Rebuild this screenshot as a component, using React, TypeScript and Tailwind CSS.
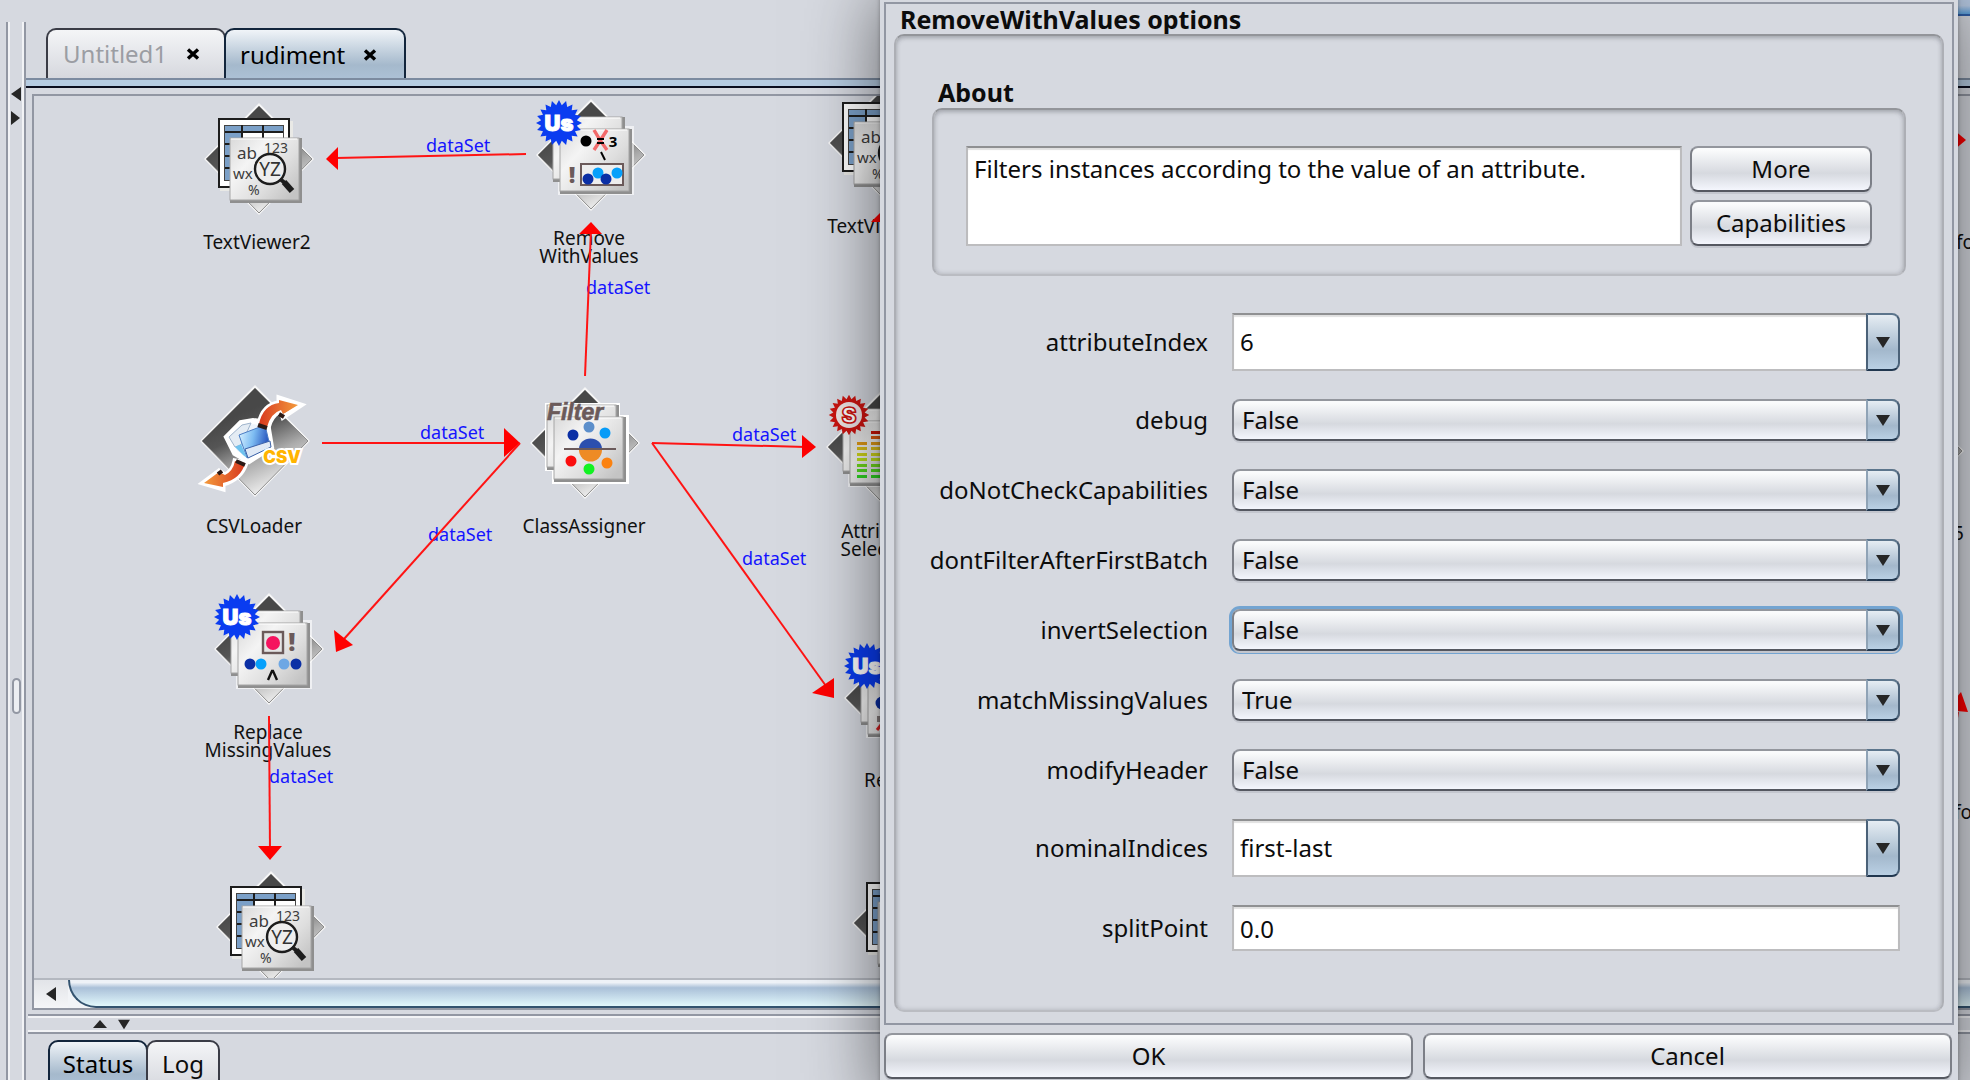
import type { ReactNode } from "react";

const ORIGIN = { x: 34, y: 96 };

/* ---------- small glyphs ---------- */

function Triangle({ dir, className }: { dir: "left" | "right" | "up" | "down"; className?: string }) {
  const points = {
    left: "12,0 12,14 2,7",
    right: "2,0 2,14 11,7",
    up: "0,11 14,11 7,3",
    down: "0,2 14,2 7,13",
  }[dir];
  return (
    <svg viewBox="0 0 14 14" className={className ?? "h-[14px] w-[14px]"} aria-hidden="true">
      <polygon points={points} fill="#262626" />
    </svg>
  );
}

function CloseGlyph() {
  return (
    <svg viewBox="0 0 14 14" className="h-[14px] w-[14px]" aria-hidden="true">
      <path d="M2 2.5 L12 11.5 M12 2.5 L2 11.5" stroke="#000" strokeWidth="3.4" />
    </svg>
  );
}

/* ---------- node drawings, centred on 0,0 ---------- */

function Defs() {
  return (
    <svg className="absolute h-0 w-0" aria-hidden="true">
      <defs>
        <linearGradient id="diamond" gradientUnits="userSpaceOnUse" x1="-22" y1="-24" x2="12" y2="50">
          <stop offset="0" stopColor="#484848" />
          <stop offset="0.25" stopColor="#555" />
          <stop offset="0.6" stopColor="#aaa" />
          <stop offset="1" stopColor="#efefef" />
        </linearGradient>
        <linearGradient id="card" x1="0" y1="0" x2="1" y2="0.8">
          <stop offset="0" stopColor="#d9d9d9" />
          <stop offset="0.35" stopColor="#f4f4f4" />
          <stop offset="0.7" stopColor="#dedede" />
          <stop offset="1" stopColor="#c4c4c4" />
        </linearGradient>
        <linearGradient id="arrow" x1="0" y1="0" x2="1" y2="0">
          <stop offset="0" stopColor="#d8391f" />
          <stop offset="1" stopColor="#f39a3c" />
        </linearGradient>
        <linearGradient id="arrowBack" x1="1" y1="0" x2="0" y2="0">
          <stop offset="0" stopColor="#d8391f" />
          <stop offset="1" stopColor="#f39a3c" />
        </linearGradient>
        <linearGradient id="folder" x1="0" y1="0.3" x2="1" y2="0.5">
          <stop offset="0" stopColor="#d4efff" />
          <stop offset="0.45" stopColor="#7dbcf2" />
          <stop offset="1" stopColor="#1c48b8" />
        </linearGradient>
      </defs>
    </svg>
  );
}

function Diamond() {
  return (
    <>
      <polygon points="0,-56 55,0 0,56 -55,0" fill="#f6f6f6" />
      <polygon points="0,-53 53,0 0,54 -53,0" fill="url(#diamond)" stroke="#8d8d8d" strokeWidth="1" />
    </>
  );
}

function Card({ x, y }: { x: number; y: number }) {
  return (
    <>
      <rect x={x} y={y} width="72" height="65" fill="#8f8f8f" />
      <rect x={x} y={y} width="69" height="62" fill="url(#card)" stroke="#a5a5a5" />
      <path d={`M${x + 1} ${y + 1} h66`} stroke="#fff" strokeWidth="1" />
    </>
  );
}

function Stack() {
  return (
    <>
      <rect x="-33" y="-29" width="76" height="69" fill="#fff" opacity="0.6" />
      <Card x={-38} y={-38} />
      <Card x={-31} y={-26} />
    </>
  );
}

const BURST = Array.from({ length: 40 }, (_, i) => {
  const r = i % 2 ? 18 : 23;
  const a = (i * Math.PI) / 20;
  return `${(r * Math.sin(a)).toFixed(1)},${(-r * Math.cos(a)).toFixed(1)}`;
}).join(" ");

function UsBadge() {
  return (
    <g transform="translate(-32,-32)">
      <polygon points={BURST} fill="#0a3cf0" />
      <text x="0" y="8" textAnchor="middle" fontFamily="Inter, sans-serif" fontWeight="900" fontSize="22" fill="#fff" stroke="#fff" strokeWidth="1">
        Us
      </text>
    </g>
  );
}

function SBadge() {
  return (
    <g transform="translate(-32,-32)">
      <polygon points={BURST} fill="#cc1410" transform="scale(0.88)" />
      <circle r="13" fill="#efe6e6" />
      <text x="0" y="8" textAnchor="middle" fontFamily="Inter, sans-serif" fontWeight="900" fontSize="22" fill="#fff" stroke="#cc1410" strokeWidth="1.6">
        S
      </text>
    </g>
  );
}

function ViewerIcon() {
  return (
    <>
      <Diamond />
      <rect x="-39" y="-38" width="73" height="70" fill="#e9e9e6" />
      <rect x="-40" y="-40" width="70" height="68" fill="#fff" stroke="#1d1d1d" strokeWidth="2" />
      <rect x="-35" y="-34" width="60" height="56" fill="#444" />
      <rect x="-34" y="-33" width="58" height="54" fill="#fff" />
      <rect x="-34" y="-33" width="58" height="6" fill="#7ba0c8" />
      <rect x="-34" y="-33" width="16" height="54" fill="#7ba0c8" />
      <path d="M-34 -27 H24 M-34 -15 H24 M-34 -3 H24 M-34 9 H24 M-17 -34 V21 M4 -34 V21" stroke="#1d1d1d" strokeWidth="2" />
      <Card x={-29} y={-21} />
      <g fontFamily="'Noto Sans', sans-serif" fill="#3c3c3c">
        <text x="-22" y="0" fontSize="17">ab</text>
        <text x="5" y="-6" fontSize="14">123</text>
        <text x="-26" y="20" fontSize="15">wx</text>
        <text x="-11" y="36" fontSize="14">%</text>
      </g>
      <circle cx="11" cy="10" r="15" fill="#eee" stroke="#1d1d1d" strokeWidth="2.4" />
      <text x="11" y="17" textAnchor="middle" fontFamily="'Noto Sans', sans-serif" fontSize="19" fill="#333">
        YZ
      </text>
      <path d="M21 20 L26 24" stroke="#1d1d1d" strokeWidth="4" />
      <path d="M25 23 L33 32" stroke="#1d1d1d" strokeWidth="6" />
    </>
  );
}

function RemoveIcon() {
  return (
    <>
      <Diamond />
      <Stack />
      <circle cx="-5" cy="-14" r="5.5" />
      <path d="M3 -25 Q9 -14 16 -5 M16 -25 Q9 -14 3 -5" fill="none" stroke="#f26b6b" strokeWidth="3.4" />
      <path d="M6 -16 H13 M6 -12 H13" stroke="#000" strokeWidth="2" />
      <text x="22" y="-8" textAnchor="middle" fontFamily="'Noto Sans', sans-serif" fontWeight="700" fontSize="15">3</text>
      <path d="M10 -3 L14 5" stroke="#000" strokeWidth="2" />
      <text x="-19" y="28" textAnchor="middle" fontFamily="'Noto Sans', sans-serif" fontWeight="900" fontSize="23" fill="#6b5a5a">!</text>
      <rect x="-10" y="9" width="42" height="21" fill="#eee" stroke="#6b5a5a" strokeWidth="2" />
      <circle cx="-3" cy="24" r="5.5" fill="#0b2fa5" />
      <circle cx="7" cy="18" r="5.5" fill="#06a0fb" />
      <circle cx="15" cy="24" r="5.5" fill="#0b2fa5" />
      <circle cx="26" cy="18" r="5.5" fill="#06a0fb" />
      <UsBadge />
    </>
  );
}

function ReplaceIcon() {
  return (
    <>
      <Diamond />
      <Stack />
      <rect x="-6" y="-17" width="20" height="21" fill="#e5e5e5" stroke="#6b5a5a" strokeWidth="2.4" />
      <circle cx="4" cy="-6" r="7" fill="#f5135f" />
      <text x="23" y="2" textAnchor="middle" fontFamily="'Noto Sans', sans-serif" fontWeight="900" fontSize="25" fill="#6b5a5a">!</text>
      <circle cx="-19" cy="15" r="5.5" fill="#0b2fa5" />
      <circle cx="-8" cy="15" r="5.5" fill="#06a0fb" />
      <circle cx="15" cy="15" r="5.5" fill="#6da7e4" />
      <circle cx="27" cy="15" r="5.5" fill="#0b2fa5" />
      <path d="M-1 31 L3 22 H4 L8 31" fill="none" stroke="#111" strokeWidth="2.4" />
      <UsBadge />
    </>
  );
}

function RemoveMoreIcon() {
  return (
    <>
      <Diamond />
      <Stack />
      <circle cx="-17" cy="5" r="6.5" fill="#0b2fa5" />
      <rect x="-22" y="18" width="10" height="6" fill="#8a8080" />
      <path d="M-22 32 L-14 22" stroke="#d22" strokeWidth="3" />
      <UsBadge />
    </>
  );
}

function AssignerIcon() {
  return (
    <>
      <Diamond />
      <path d="M-40 -40 H35 V-28 H44 V41 H-33 V28 H-40 Z" fill="#fff" />
      <Card x={-38} y={-38} />
      <Card x={-31} y={-26} />
      <text x="-10" y="-23" textAnchor="middle" fontFamily="'Liberation Sans', sans-serif" fontStyle="italic" fontWeight="700" fontSize="23" fill="#6b5a5a" stroke="#6b5a5a" strokeWidth="0.6">
        Filter
      </text>
      <circle cx="-12" cy="-8" r="5.5" fill="#0b2fa5" />
      <circle cx="4" cy="-16" r="5.5" fill="#5c8fcb" />
      <circle cx="20" cy="-10" r="5.5" fill="#069cf8" />
      <path d="M-6 6 A11 10 0 0 1 17 6 Z" fill="#2c4fae" />
      <path d="M-6 7 A11 11 0 0 0 17 7 Z" fill="#ee8b25" />
      <path d="M-21 6 H31" stroke="#6b5a5a" strokeWidth="2" />
      <circle cx="-14" cy="18" r="5.5" fill="#fb0d0d" />
      <circle cx="4" cy="26" r="5.5" fill="#12f222" />
      <circle cx="22" cy="20" r="5.5" fill="#fb8210" />
    </>
  );
}

const BARS = ["#cc1408", "#dd5a10", "#e09a18", "#dcc01c", "#cfd41c", "#bbdf1c", "#6fd81c", "#4fd820", "#2fd324"];

function SelectionIcon() {
  return (
    <>
      <Diamond />
      <Stack />
      {[0, 1, 2, 3].map((col) =>
        BARS.map((fill, row) =>
          row >= [2, 0, 3, 1][col] ? (
            <rect key={`${col}-${row}`} x={-24 + col * 14} y={-16 + row * 5 + Math.floor(row / 2)} width="10" height="3" fill={fill} />
          ) : null,
        ),
      )}
      <SBadge />
    </>
  );
}

function CsvIcon() {
  return (
    <>
      <Diamond />
      <path d="M4 -17 Q8 -36 24 -38 L24 -43 L46 -36 L28 -24 L26 -30 Q16 -26 13 -13 Z" fill="url(#arrow)" stroke="#fff" strokeWidth="5" />
      <path d="M-20 20 Q-22 30 -30 34 L-36 30 L-52 42 L-32 48 L-32 43 Q-14 38 -9 22 Z" fill="url(#arrowBack)" stroke="#fff" strokeWidth="5" />
      <path d="M-28 -4 L-14 -18 L-2 -20 L12 -18 L16 6 L-6 20 L-20 12 Z" fill="#eef4fb" stroke="#fff" strokeWidth="6" />
      <path d="M-26 -4 L-13 -16 L-4 -18 L-14 4 L-20 6 Z" fill="#e4ecf4" stroke="#9fb4cc" />
      <path d="M-16 -6 L10 -16 L15 5 L-8 17 Z" fill="url(#folder)" stroke="#4a7cc4" />
      <path d="M-10 8 L15 0 L16 6 L-7 17 Z" fill="#dfe9f6" stroke="#3c62a8" />
      <path d="M-20 6 L-14 3 L-8 17 L-12 14 Z" fill="#6fc2ee" />
      <path d="M4 -17 Q8 -36 24 -38 L24 -41 L43 -36 L28 -27 L26 -31 Q16 -28 12 -14 Z" fill="url(#arrow)" />
      <path d="M-20 20 Q-22 30 -30 34 L-36 31 L-51 42 L-32 46 L-32 42 Q-14 38 -10 22 Z" fill="url(#arrowBack)" />
      <path d="M3 -16 L12 -13 M-19 20 L-10 24" stroke="#2c1a16" strokeWidth="4" />
      <path d="M24 -27 L29 -24 M-37 33 L-33 30" stroke="#2c1a16" strokeWidth="4" />
      <text x="27" y="22" textAnchor="middle" fontFamily="Inter, sans-serif" fontWeight="900" fontSize="17" fill="#ffb400" stroke="#fff" strokeWidth="4" paintOrder="stroke">
        CSV
      </text>
    </>
  );
}

/* ---------- canvas data ---------- */

type FlowNode = { id: string; x: number; y: number; lines: string[]; labelX: number; labelY: number; icon: ReactNode };

const NODES: FlowNode[] = [
  { id: "tv2", x: 259, y: 159, lines: ["TextViewer2"], labelX: 257, labelY: 242, icon: <ViewerIcon /> },
  { id: "rwv", x: 591, y: 155, lines: ["Remove", "WithValues"], labelX: 589, labelY: 247, icon: <RemoveIcon /> },
  { id: "tv3", x: 883, y: 143, lines: ["TextViewer3"], labelX: 881, labelY: 226, icon: <ViewerIcon /> },
  { id: "csv", x: 255, y: 441, lines: ["CSVLoader"], labelX: 254, labelY: 526, icon: <CsvIcon /> },
  { id: "cls", x: 585, y: 443, lines: ["ClassAssigner"], labelX: 584, labelY: 526, icon: <AssignerIcon /> },
  { id: "att", x: 881, y: 447, lines: ["Attribute", "Selection"], labelX: 881, labelY: 540, icon: <SelectionIcon /> },
  { id: "rep", x: 269, y: 649, lines: ["Replace", "MissingValues"], labelX: 268, labelY: 741, icon: <ReplaceIcon /> },
  { id: "rem", x: 899, y: 698, lines: ["Remove"], labelX: 900, labelY: 780, icon: <RemoveMoreIcon /> },
  { id: "tv4", x: 271, y: 927, lines: [], labelX: 0, labelY: 0, icon: <ViewerIcon /> },
  { id: "tv5", x: 907, y: 923, lines: [], labelX: 0, labelY: 0, icon: <ViewerIcon /> },
  { id: "pf1", x: 1911, y: 159, lines: ["Performance"], labelX: 1984, labelY: 242, icon: null },
  { id: "j48", x: 1909, y: 451, lines: ["Classifier5"], labelX: 1918, labelY: 533, icon: <Diamond /> },
  { id: "pf2", x: 1911, y: 729, lines: ["Performance"], labelX: 1982, labelY: 812, icon: null },
];

const EDGES = [
  { line: "M526 154 L336 158", head: "326,159 338,147 338,170" },
  { line: "M585 376 L591 230", head: "591,222 579,234 602,234" },
  { line: "M322 443 H508", head: "520,443 504,428 504,457" },
  { line: "M520 443 L344 639", head: "334,630 336,652 353,645" },
  { line: "M652 443 L806 447", head: "816,447 802,435 802,458" },
  { line: "M652 443 L826 686", head: "834,698 834,678 812,693" },
  { line: "M269 716 L270 850", head: "270,860 258,846 282,846" },
  { line: "M1900 140 H1958", head: "1966,140 1954,130 1954,150" },
  { line: "M1950 760 L1958 712", head: "1961,692 1946,710 1968,712" },
  { line: "M884 218 L884 222", head: "884,209 871,222 896,222" },
];

const EDGE_LABELS = [
  { x: 426, y: 145 },
  { x: 586, y: 287 },
  { x: 420, y: 432 },
  { x: 428, y: 534 },
  { x: 732, y: 434 },
  { x: 742, y: 558 },
  { x: 269, y: 776 },
];

function FlowCanvas() {
  return (
    <div className="relative flex-1 overflow-hidden">
      {NODES.map((n) => (
        <svg
          key={n.id}
          viewBox="-60 -60 120 120"
          className="absolute h-[120px] w-[120px]"
          style={{ left: n.x - 60 - ORIGIN.x, top: n.y - 60 - ORIGIN.y }}
          aria-hidden="true"
        >
          {n.icon}
        </svg>
      ))}
      {NODES.filter((n) => n.lines.length > 0).map((n) => (
        <div
          key={n.id}
          className="absolute -translate-x-1/2 -translate-y-1/2 text-center text-[19px] leading-[18px] whitespace-nowrap text-[#111]"
          style={{ left: n.labelX - ORIGIN.x, top: n.labelY - ORIGIN.y }}
        >
          {n.lines.map((l) => (
            <div key={l}>{l}</div>
          ))}
        </div>
      ))}
      {EDGE_LABELS.map((l, i) => (
        <span
          key={i}
          className="absolute -translate-y-1/2 text-[18px] leading-[18px] text-[#1414ff]"
          style={{ left: l.x - ORIGIN.x, top: l.y - ORIGIN.y }}
        >
          dataSet
        </span>
      ))}
      <svg viewBox="34 96 2000 900" className="absolute top-0 left-0 h-[900px] w-[2000px]" aria-hidden="true">
        {EDGES.map((e) => (
          <g key={e.head}>
            <path d={e.line} stroke="#ff1414" strokeWidth="2" fill="none" />
            <polygon points={e.head} fill="#ff0000" />
          </g>
        ))}
      </svg>
    </div>
  );
}

/* ---------- tabs ---------- */

const TAB_BLUE = "border-[#12253c] bg-linear-to-b from-[#f0f4f8] via-[#a5b9cc] via-70% to-[#adc2d7] text-black";
const TAB_GREY = "border-[#3a3c46] bg-linear-to-b from-[#f4f5f7] to-[#d6d8de]";

function DocumentTabs() {
  return (
    <div role="tablist" className="flex h-[80px] items-end pl-[20px]">
      <div className={`flex h-[52px] w-[180px] items-center justify-between rounded-t-[10px] border-2 border-b-[#0a0a1c] pr-[24px] pl-[15px] ${TAB_GREY}`}>
        <button role="tab" aria-selected="false" className="text-[#9b9da3]">Untitled1</button>
        <button aria-label="Close Untitled1"><CloseGlyph /></button>
      </div>
      <div className={`-ml-[2px] flex h-[52px] w-[182px] items-center justify-between rounded-t-[10px] border-2 border-b-0 pr-[27px] pl-[14px] ${TAB_BLUE}`}>
        <button role="tab" aria-selected="true">rudiment</button>
        <button aria-label="Close rudiment"><CloseGlyph /></button>
      </div>
    </div>
  );
}

/* ---------- dialog controls ---------- */

const GLOSS =
  "rounded-[8px] border-2 border-x-[#7c7f87] border-t-[#93969d] border-b-[#555861] bg-linear-to-b from-[#fafbfc] from-5% via-[#d6d9df] via-60% to-[#f4f6fd] shadow-[0_2px_0_#c3c6ce]";
const BLUE =
  "flex w-[34px] items-center justify-center rounded-r-[8px] border-2 border-x-[#4a6178] border-t-[#5c758c] border-b-[#21374f] bg-linear-to-b from-[#e6edf3] via-[#a3b8cc] via-65% to-[#bad0e4]";
const GROUP =
  "rounded-[10px] border-2 border-x-[#adafb5] border-t-[#93959a] border-b-[#babcc2] shadow-[inset_0_2px_4px_rgba(80,82,90,0.3),inset_0_0_5px_rgba(80,82,90,0.2)]";
const FIELD =
  "border-2 border-x-[#bcbcbe] border-t-[#8f9092] border-b-[#bdbdbf] bg-white shadow-[inset_0_2px_1px_#e0e0e0] outline-none";

type Option = { name: string; value: string; kind: "combo" | "select" | "text"; focused?: boolean };

const OPTIONS: Option[] = [
  { name: "attributeIndex", value: "6", kind: "combo" },
  { name: "debug", value: "False", kind: "select" },
  { name: "doNotCheckCapabilities", value: "False", kind: "select" },
  { name: "dontFilterAfterFirstBatch", value: "False", kind: "select" },
  { name: "invertSelection", value: "False", kind: "select", focused: true },
  { name: "matchMissingValues", value: "True", kind: "select" },
  { name: "modifyHeader", value: "False", kind: "select" },
  { name: "nominalIndices", value: "first-last", kind: "combo" },
  { name: "splitPoint", value: "0.0", kind: "text" },
];

function OptionControl({ option }: { option: Option }) {
  if (option.kind === "combo") {
    return (
      <div className="flex h-[58px] min-w-0">
        <input id={option.name} defaultValue={option.value} className={`min-w-0 flex-1 border-r-0 px-[6px] ${FIELD}`} />
        <button aria-label={`Choose ${option.name}`} className={BLUE}>
          <Triangle dir="down" />
        </button>
      </div>
    );
  }
  if (option.kind === "text") {
    return <input id={option.name} defaultValue={option.value} className={`h-[46px] w-full min-w-0 px-[6px] ${FIELD}`} />;
  }
  return (
    <div className={`relative h-[42px] rounded-[8px] ${option.focused ? "ring-3 ring-[#73a4d1]" : ""}`}>
      <select id={option.name} defaultValue={option.value} className={`h-full w-full appearance-none pl-[8px] leading-[36px] outline-none ${GLOSS}`}>
        <option>True</option>
        <option>False</option>
      </select>
      <span className={`pointer-events-none absolute inset-y-0 right-0 border-l-[#8fa3b6] ${BLUE}`}>
        <Triangle dir="down" />
      </span>
    </div>
  );
}

function OptionsDialog() {
  return (
    <section
      role="dialog"
      aria-label="RemoveWithValues options"
      className="absolute -top-6 right-3 -bottom-2 left-[880px] flex flex-col bg-[#d6d9e0] px-1 pt-[26px] pb-[9px] shadow-[0_20px_70px_rgba(0,0,0,0.55),0_0_4px_rgba(0,0,0,0.3)]"
    >
      <div className="flex flex-1 flex-col border-2 border-[#9297a3] px-2 pb-[11px]">
        <h1 className="pl-[6px] text-[25px] leading-[30px] font-bold">RemoveWithValues options</h1>
        <div className={`flex-1 px-[36px] pt-[40px] ${GROUP}`}>
          <h2 className="pl-[6px] text-[25px] leading-[32px] font-bold">About</h2>
          <div className={`flex gap-2 pt-[36px] pr-[32px] pb-[28px] pl-[32px] ${GROUP}`}>
            <textarea
              aria-label="About"
              readOnly
              defaultValue="Filters instances according to the value of an attribute."
              className={`h-[100px] min-w-0 flex-1 resize-none px-[6px] py-[5px] leading-[32px] ${FIELD}`}
            />
            <div className="flex w-[182px] flex-col gap-2">
              <button className={`h-[46px] ${GLOSS}`}>More</button>
              <button className={`h-[46px] ${GLOSS}`}>Capabilities</button>
            </div>
          </div>
          <div className="mt-[37px] mr-[6px] grid grid-cols-[276px_minmax(0,1fr)] items-center gap-x-[24px] gap-y-[28px]">
            {OPTIONS.map((o) => (
              <div key={o.name} className="contents">
                <label htmlFor={o.name} className="justify-self-end whitespace-nowrap">
                  {o.name}
                </label>
                <OptionControl option={o} />
              </div>
            ))}
          </div>
        </div>
      </div>
      <div className="mt-[8px] flex gap-[10px] pr-[2px]">
        <button className={`h-[46px] flex-1 ${GLOSS}`}>OK</button>
        <button className={`h-[46px] flex-1 ${GLOSS}`}>Cancel</button>
      </div>
    </section>
  );
}

/* ---------- page ---------- */

export default function App() {
  return (
    <div className="relative flex h-screen overflow-hidden bg-[#d6d9e0] font-['Noto_Sans',sans-serif] text-[24px] leading-[32px] text-[#0c0c0c]">
      <Defs />
      <div className="mt-[22px] ml-[6px] flex w-[20px] shrink-0 flex-col items-center justify-between border-x-2 border-[#9297a3] shadow-[inset_2px_0_0_#f2f3f6,inset_-2px_0_0_#f2f3f6]">
        <div className="mt-[65px] flex flex-col gap-[10px]">
          <button aria-label="Collapse left" className="block"><Triangle dir="left" /></button>
          <button aria-label="Expand left" className="block"><Triangle dir="right" /></button>
        </div>
        <div className="mb-[366px] h-[36px] w-[9px] rounded-full border-2 border-[#9297a3] bg-[#eceef2]" />
      </div>

      <main className="flex min-w-0 flex-1 flex-col">
        <DocumentTabs />
        <div className="-mt-[2px] h-[10px] border-t-2 border-b-2 border-t-[#7c8ba0] border-b-[#0a0d1e] bg-[#b6cce2]" />
        <div className="mt-[6px] ml-[6px] flex flex-1 flex-col border-2 border-r-0 border-[#9297a3]">
          <FlowCanvas />
          <div className="flex h-[30px] border-t-2 border-[#b4b8c0] bg-[#f2f4f7]">
            <button aria-label="Scroll left" className="flex w-[34px] items-center justify-center bg-linear-to-b from-[#e2e4e8] to-[#f5f6f8]">
              <Triangle dir="left" />
            </button>
            <div className="flex-1 overflow-hidden">
              <div className="h-full rounded-bl-[28px] border-b-2 border-l-2 border-[#33536f] bg-linear-to-b from-[#eef2f7] from-10% via-[#aac0d8] via-30% to-[#e2f8fc]" />
            </div>
          </div>
        </div>
        <div className="mt-[4px] ml-[2px] flex h-[20px] items-center gap-[10px] border-y-2 border-[#9297a3] pl-[65px] shadow-[inset_0_2px_0_#f2f3f6,inset_0_-2px_0_#f2f3f6]">
          <button aria-label="Collapse log" className="block"><Triangle dir="up" /></button>
          <button aria-label="Expand log" className="block"><Triangle dir="down" className="h-[12px] w-[14px]" /></button>
        </div>
        <div role="tablist" className="mt-[6px] flex h-[40px] overflow-hidden pl-[22px]">
          <button role="tab" aria-selected="true" className={`h-[50px] w-[100px] rounded-t-[10px] border-2 pb-[3px] ${TAB_BLUE}`}>
            Status
          </button>
          <button role="tab" aria-selected="false" className={`-ml-[2px] h-[50px] w-[74px] rounded-t-[10px] border-2 pb-[3px] ${TAB_GREY}`}>
            Log
          </button>
        </div>
      </main>

      <div className="absolute top-0 right-0 h-4 w-3 border-b-2 border-[#2f5ea8] bg-linear-to-b from-[#b9cce6] from-40% to-[#5aa0dc]" />
      <OptionsDialog />
    </div>
  );
}
